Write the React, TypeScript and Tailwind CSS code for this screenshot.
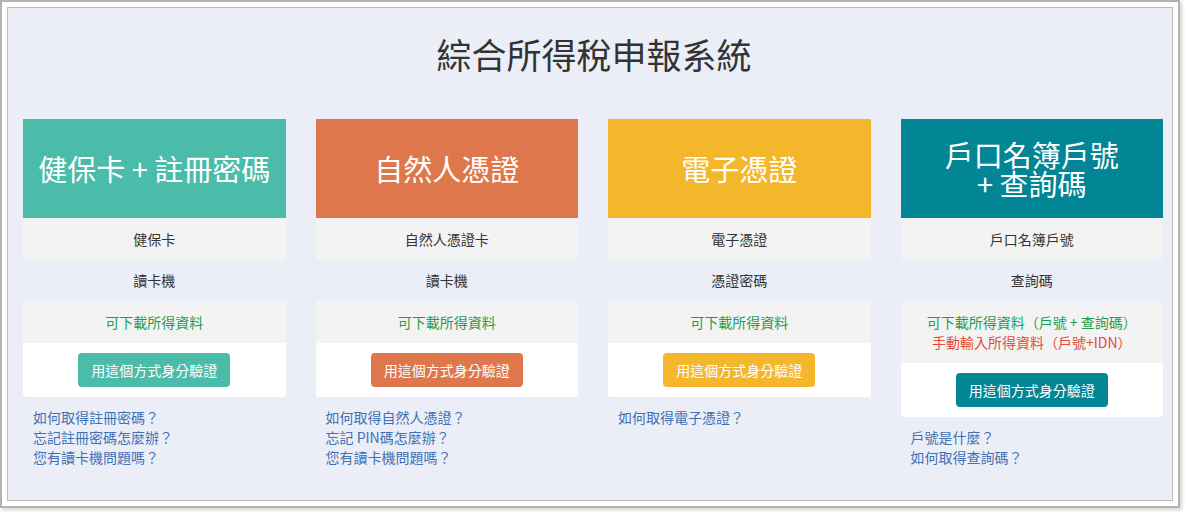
const font = {
  fontFamily: '"Noto Sans CJK TC", "Noto Sans", "Liberation Sans", sans-serif',
};

type Method = {
  title: string[];
  headerClass: string;
  buttonClass: string;
  item: string;
  device: string;
  green: string;
  red?: string;
  links: string[];
};

const methods: Method[] = [
  {
    title: ["健保卡 + 註冊密碼"],
    headerClass: "bg-[#4abca9]",
    buttonClass: "bg-[#4abca9]",
    item: "健保卡",
    device: "讀卡機",
    green: "可下載所得資料",
    links: ["如何取得註冊密碼？", "忘記註冊密碼怎麼辦？", "您有讀卡機問題嗎？"],
  },
  {
    title: ["自然人憑證"],
    headerClass: "bg-[#df774c]",
    buttonClass: "bg-[#df774c]",
    item: "自然人憑證卡",
    device: "讀卡機",
    green: "可下載所得資料",
    links: ["如何取得自然人憑證？", "忘記 PIN碼怎麼辦？", "您有讀卡機問題嗎？"],
  },
  {
    title: ["電子憑證"],
    headerClass: "bg-[#f4b72c]",
    buttonClass: "bg-[#f4b72c]",
    item: "電子憑證",
    device: "憑證密碼",
    green: "可下載所得資料",
    links: ["如何取得電子憑證？"],
  },
  {
    title: ["戶口名簿戶號", "+ 查詢碼"],
    headerClass: "bg-[#028594]",
    buttonClass: "bg-[#028594]",
    item: "戶口名簿戶號",
    device: "查詢碼",
    green: "可下載所得資料（戶號 + 查詢碼）",
    red: "手動輸入所得資料（戶號+IDN）",
    links: ["戶號是什麼？", "如何取得查詢碼？"],
  },
];

function MethodCard({ m }: { m: Method }) {
  return (
    <div className="w-[262.5px] shrink-0">
      <div
        className={`${m.headerClass} flex h-[99px] items-center justify-center text-center text-[29px] leading-[29px] text-white`}
      >
        <h2>
          {m.title.map((t, i) => (
            <span key={t}>
              {i > 0 && <br />}
              {t}
            </span>
          ))}
        </h2>
      </div>
      <div className="flex h-[42px] items-center justify-center rounded-b-[3px] bg-[#f3f3f3] text-[14px] text-[#333]">
        {m.item}
      </div>
      <div className="flex h-[41px] items-center justify-center text-[14px] text-[#333]">
        {m.device}
      </div>
      <div className="overflow-hidden rounded-[3px] bg-white">
        <div className="bg-[#f3f3f3] py-[11px] text-center text-[14px] leading-[20px]">
          <div className="text-[#1d9e4e]">{m.green}</div>
          {m.red && <div className="text-[#e44a3c]">{m.red}</div>}
        </div>
        <div className="flex justify-center py-[10px]">
          <button
            className={`${m.buttonClass} h-[34px] w-[152px] rounded-[4px] text-[14px] text-white`}
          >
            用這個方式身分驗證
          </button>
        </div>
      </div>
      <div className="mt-[10px] px-[10px] text-[14px] leading-[20px] text-[#3f71b4]">
        {m.links.map((l) => (
          <div key={l}>{l}</div>
        ))}
      </div>
    </div>
  );
}

export default function App() {
  return (
    <div className="h-[513px] w-[1185px] bg-white" style={font}>
      <div className="h-[508px] w-[1180px] border-2 border-[#b3b3b3] bg-white p-[5px] shadow-[2px_2px_4px_rgba(0,0,0,0.18)]">
        <div className="h-full border border-[#bdbdbd] bg-[#ebeef6] pt-[26px]">
          <h1 className="pl-[8px] text-center text-[35px] leading-[40px] text-[#333]">
            綜合所得稅申報系統
          </h1>
          <div className="mt-[45px] flex gap-[30px] pl-[15px]">
            {methods.map((m) => (
              <MethodCard key={m.item} m={m} />
            ))}
          </div>
        </div>
      </div>
    </div>
  );
}
